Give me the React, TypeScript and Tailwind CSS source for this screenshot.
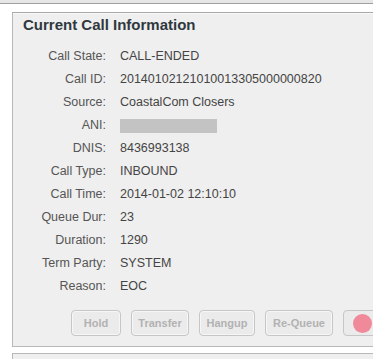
export default function App() {
  const rows: { label: string; value?: string }[] = [
    { label: 'Call State:', value: 'CALL-ENDED' },
    { label: 'Call ID:', value: '20140102121010013305000000820' },
    { label: 'Source:', value: 'CoastalCom Closers' },
    { label: 'ANI:' },
    { label: 'DNIS:', value: '8436993138' },
    { label: 'Call Type:', value: 'INBOUND' },
    { label: 'Call Time:', value: '2014-01-02 12:10:10' },
    { label: 'Queue Dur:', value: '23' },
    { label: 'Duration:', value: '1290' },
    { label: 'Term Party:', value: 'SYSTEM' },
    { label: 'Reason:', value: 'EOC' },
  ]

  const buttons = [
    { label: 'Hold', width: 'w-[50px]' },
    { label: 'Transfer', width: 'w-[58px]' },
    { label: 'Hangup', width: 'w-[56px]' },
    { label: 'Re-Queue', width: 'w-[68px]' },
  ]

  return (
    <div className="w-[373px] h-[359px] overflow-hidden bg-white font-['Liberation_Sans',Arial,sans-serif]">
      {/* top strip */}
      <div className="h-[4px] bg-[#e6e6e6] border-b border-[#a0a0a0]" />

      {/* Current Call panel */}
      <div className="mt-[8px] ml-[12px] w-[400px] h-[335px] border border-[#b8b8b8] border-t-[#a8a8a8] bg-[#efefef]">
        <div className="pl-[10px] pt-[2px] border-t border-[#fafafa]">
          <h2 className="text-[15px] leading-[18px] font-bold text-[#2f383e]">Current Call Information</h2>
        </div>

        <div className="mt-[11px] flex flex-col">
          {rows.map((row) => (
            <div key={row.label} className="h-[23px] flex items-center text-[12.5px]">
              <span className="w-[93px] text-right text-[#555]">{row.label}</span>
              <span className="ml-[14px] text-[#444]">
                {row.value ?? <span className="block w-[97px] h-[14px] bg-[#c3c3c3]" />}
              </span>
            </div>
          ))}
        </div>

        {/* action buttons */}
        <div className="mt-[12px] ml-[58px] flex gap-[10px]">
          {buttons.map((b) => (
            <button
              key={b.label}
              className={`${b.width} h-[26px] rounded-[4px] border border-[#c6c6c6] bg-[#ebebeb] shadow-[inset_0_0_0_1px_#f6f6f6] text-[11px] font-bold text-[#b2b2b2]`}
            >
              {b.label}
            </button>
          ))}
          <button className="w-[50px] h-[26px] rounded-[4px] border border-[#c6c6c6] bg-[#ebebeb] flex items-center pl-[9px]">
            <span className="block w-[19px] h-[19px] rounded-full bg-[#f08a9a]" />
          </button>
        </div>
      </div>

      {/* next panel */}
      <div className="mt-[6px] ml-[12px] w-[400px] h-[20px] border-t border-l border-[#b8b8b8] bg-[#efefef]" />
    </div>
  )
}
